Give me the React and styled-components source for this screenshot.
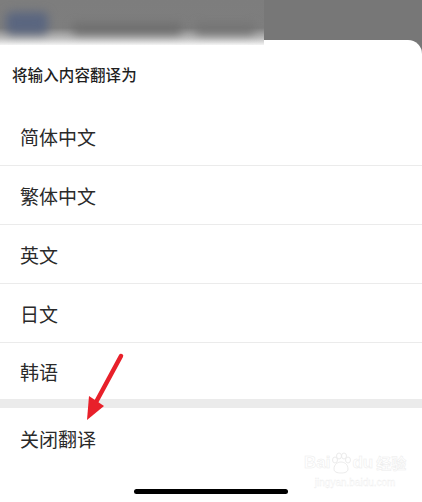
import React from 'react';
import styled, { createGlobalStyle } from 'styled-components';

const Global = createGlobalStyle`
    html, body {
        margin: 0;
        padding: 0;
        background: #777777;
    }
    body {
        font-family: "Noto Sans CJK SC", "Noto Sans", sans-serif;
    }
`

const Screen = styled.div`
    position: relative;
    width: 422px;
    height: 502px;
    overflow: hidden;
    background: #777777;
    display: flex;
    flex-direction: column;
`
const Backdrop = styled.div`
    height: 40px;
    display: flex;
`
const BlurStrip = styled.div`
    position: relative;
    z-index: 2;
    width: 264px;
    height: 45px;
    margin-bottom: -5px;
    overflow: hidden;
    background: linear-gradient(to bottom, #7d7d7d 0%, #7e7e7e 62%, #bdbdbd 85%, #f4f4f4 100%);
`
const Blob = styled.div`
    position: absolute;
    left: ${p => p.x}px;
    top: ${p => p.y}px;
    width: ${p => p.w}px;
    height: ${p => p.h}px;
    border-radius: 6px;
    background: ${p => p.color};
    filter: blur(5px);
`
const Sheet = styled.div`
    flex: 1;
    background: #ffffff;
    border-top-right-radius: 14px;
    display: flex;
    flex-direction: column;
`
const Title = styled.div`
    height: 67px;
    display: flex;
    align-items: center;
    padding-left: 12px;
    box-sizing: border-box;
    font-size: 15.5px;
    font-weight: 500;
    color: #1f1f1f;
    letter-spacing: 0.1px;
`
const Option = styled.div`
    height: ${p => (p.last ? 56 : 58)}px;
    display: flex;
    align-items: center;
    padding-left: 20px;
    font-size: 19px;
    color: #2a2a2a;
    border-bottom: ${p => (p.last ? 'none' : '1px solid #ebebeb')};
`
const Gap = styled.div`
    height: 9px;
    background: #ebebeb;
`
const Close = styled.div`
    height: 60px;
    display: flex;
    align-items: center;
    padding-left: 20px;
    font-size: 19px;
    color: #2a2a2a;
`
const HomeBar = styled.div`
    margin: 21px auto 0;
    width: 154px;
    height: 5px;
    border-radius: 3px;
    background: #000000;
`
const Arrow = styled.svg`
    position: absolute;
    left: 76px;
    top: 350px;
    z-index: 3;
`
const Watermark = styled.div`
    position: absolute;
    left: 304px;
    top: 452px;
    display: flex;
    flex-direction: column;
    align-items: center;
    color: #ffffff;
    font-family: "Liberation Sans", sans-serif;
    -webkit-text-stroke: 0.5px #ececec;
`
const WmTop = styled.div`
    display: flex;
    align-items: center;
    font-size: 17px;
    font-weight: bold;
    line-height: 20px;
`
const WmCn = styled.span`
    font-family: "Noto Sans CJK SC", sans-serif;
    font-size: 15px;
    margin-left: 3px;
`
const WmUrl = styled.div`
    font-size: 10px;
    line-height: 12px;
    margin-top: 3px;
    -webkit-text-stroke: 0.3px #ececec;
`

const options = ['简体中文', '繁体中文', '英文', '日文', '韩语'];

export default function App() {
    return (
        <Screen>
            <Global />
            <Backdrop>
                <BlurStrip>
                    <Blob x={6} y={12} w={42} h={22} color="#5a6680" />
                    <Blob x={72} y={24} w={110} h={10} color="#6d6d6d" />
                    <Blob x={195} y={24} w={60} h={10} color="#737373" />
                </BlurStrip>
            </Backdrop>
            <Sheet>
                <Title>将输入内容翻译为</Title>
                {options.map((o, i) => (
                    <Option key={o} last={i === options.length - 1}>{o}</Option>
                ))}
                <Gap />
                <Close>关闭翻译</Close>
                <HomeBar />
            </Sheet>
            <Arrow width="52" height="74" viewBox="0 0 52 74">
                <line x1="45" y1="6" x2="19" y2="54" stroke="#e8202a" strokeWidth="4.5" strokeLinecap="round" />
                <polygon points="11,70 13,46 28,56" fill="#e8202a" />
            </Arrow>
            <Watermark>
                <WmTop>
                    Bai
                    <svg width="22" height="22" viewBox="0 0 22 22">
                        <g fill="#ffffff" stroke="#e6e6e6" strokeWidth="0.8">
                            <ellipse cx="5" cy="8" rx="2.5" ry="3" />
                            <ellipse cx="9" cy="4" rx="2.5" ry="3" />
                            <ellipse cx="14" cy="4" rx="2.5" ry="3" />
                            <ellipse cx="18" cy="8" rx="2.5" ry="3" />
                            <path d="M4 17 C4 12 8 10 11 10 C14 10 18 12 18 17 C18 20 15 21 11 21 C7 21 4 20 4 17 Z" />
                        </g>
                    </svg>
                    du<WmCn>经验</WmCn>
                </WmTop>
                <WmUrl>jingyan.baidu.com</WmUrl>
            </Watermark>
        </Screen>
    );
}
